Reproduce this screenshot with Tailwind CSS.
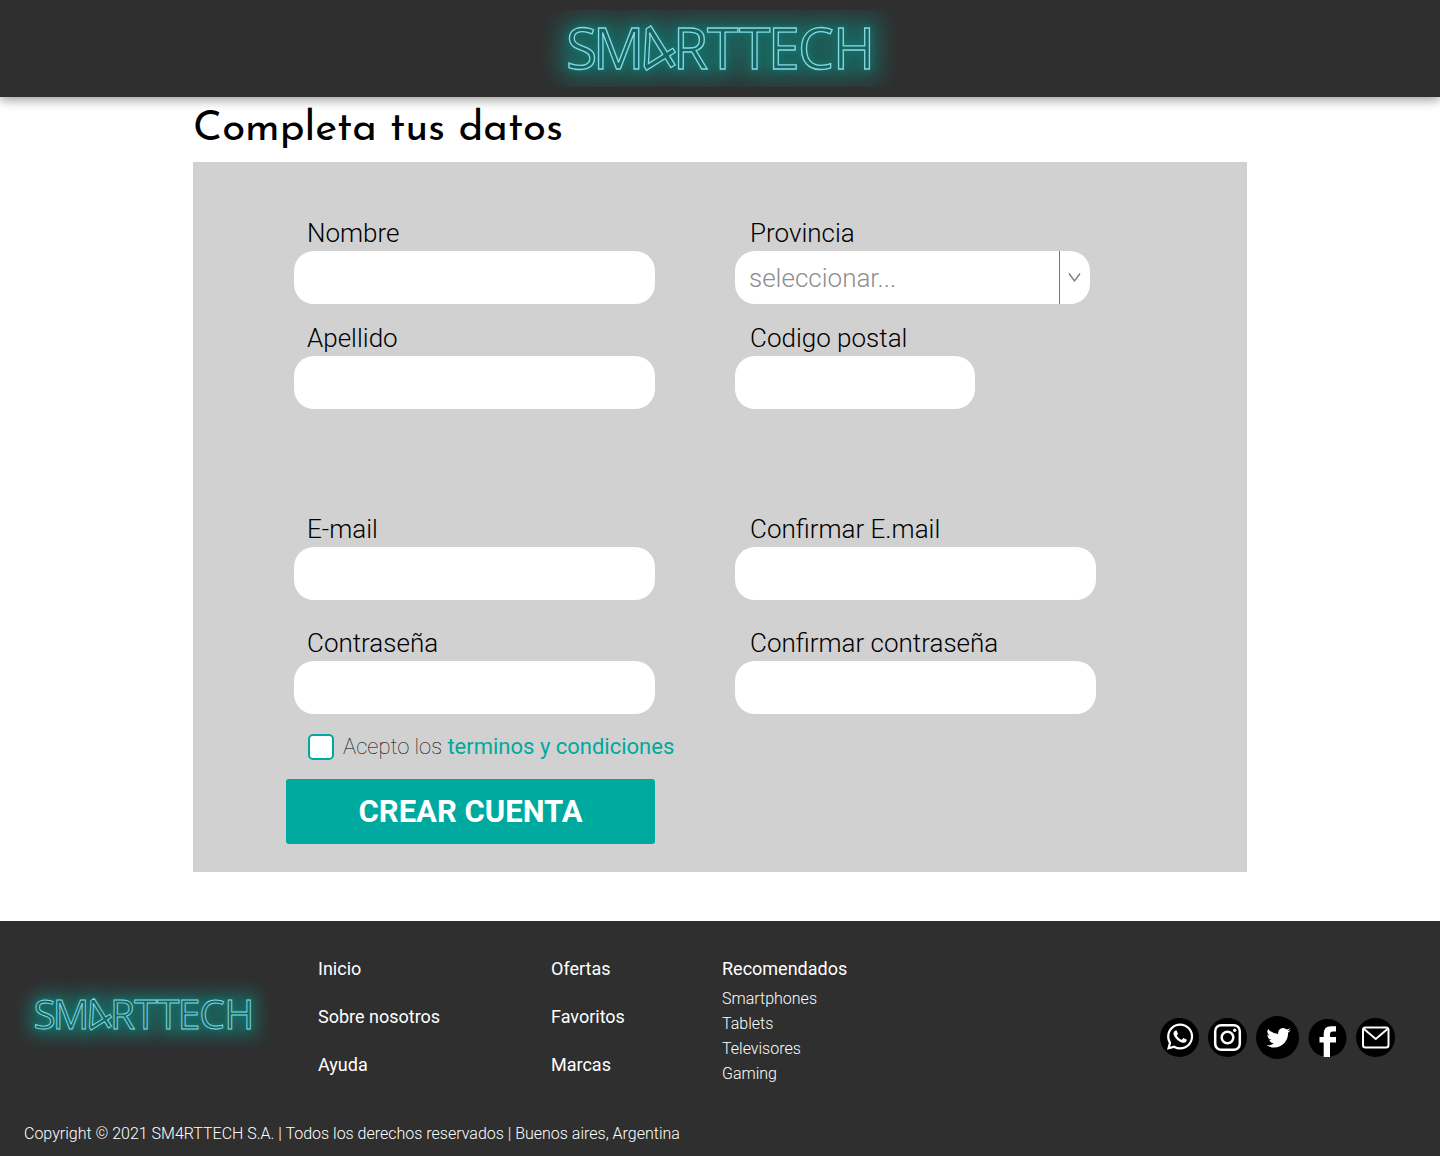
<!DOCTYPE html>
<html lang="es">
<head>
<meta charset="utf-8">
<meta name="viewport" content="width=device-width, initial-scale=1">
<title>SM4RTTECH - Completa tus datos</title>
<script src="https://cdn.jsdelivr.net/npm/@tailwindcss/browser@4"></script>
</head>
<body class="flex min-h-screen flex-col bg-white font-['Roboto',sans-serif] text-black">

<!-- Shared neon wordmark -->
<svg class="hidden">
  <defs>
    <filter id="glow" filterUnits="userSpaceOnUse" x="-40" y="-40" width="440" height="160">
      <feGaussianBlur stdDeviation="11"/>
    </filter>
    <filter id="halo" filterUnits="userSpaceOnUse" x="-40" y="-40" width="440" height="160">
      <feGaussianBlur stdDeviation="3"/>
    </filter>
    <g id="word" font-family="Open Sans, sans-serif" font-weight="400" font-size="57">
      <text x="26 53 133 167 199 228 258 293" y="59"><tspan>SM</tspan><tspan>RTTECH</tspan></text>
      <text transform="translate(111 70) rotate(-32)" font-size="64">4</text>
    </g>
    <g id="wordmark">
      <use href="#word" fill="none" stroke="#00a99d" stroke-width="20" opacity=".42" filter="url(#glow)"/>
      <use href="#word" fill="none" stroke="#00a99d" stroke-width="4" opacity=".25" filter="url(#halo)"/>
      <use href="#word" fill="#215c59" fill-opacity=".6" stroke="#7fdbe6" stroke-width="1.300"/>
    </g>
  </defs>
</svg>

<header class="relative flex justify-center bg-[#2f2f2f] py-[10px] shadow-[0_3px_10px_rgba(0,0,0,0.4)]">
  <a href="#" aria-label="SM4RTTECH"><svg class="block h-[77px] w-[360px] overflow-hidden" viewBox="0 0 360 77"><use href="#wordmark"/></svg></a>
</header>

<main class="mx-auto w-full max-w-[1054px] pb-[49px]">
  <h1 class="pt-[5px] pb-1 font-['Josefin_Sans','Lato',sans-serif] text-[42px] leading-[56px]">Completa tus datos</h1>

  <form class="bg-[#d1d1d1] pt-[55px] pr-[151px] pb-7 pl-[93px]">
    <div class="grid grid-cols-2 gap-x-20 gap-y-[18px] pl-2">
      <div>
        <label for="nombre" class="mb-0.5 block pl-[13px] text-[26px] leading-8 font-light">Nombre</label>
        <input id="nombre" type="text" class="block h-[53px] w-full rounded-[20px] bg-white px-[14px] text-[26px] font-light">
      </div>
      <div>
        <label for="provincia" class="mb-0.5 block pl-[15px] text-[26px] leading-8 font-light">Provincia</label>
        <div class="relative mr-1.5">
          <select id="provincia" class="block h-[53px] w-full appearance-none rounded-[20px] bg-white pt-0.5 pl-[14px] text-[26px] font-light text-[#8e8e8e]">
            <option>seleccionar...</option>
          </select>
          <span class="pointer-events-none absolute inset-y-0 right-0 flex w-[31px] items-center justify-center border-l border-[#777]">
            <svg class="h-[10px] w-[14px]" viewBox="0 0 14 10" fill="none" stroke="#777" stroke-width="1.3"><path d="M1 .5 6.500 8 12 .5"/></svg>
          </span>
        </div>
      </div>
      <div>
        <label for="apellido" class="mb-0.5 block pl-[13px] text-[26px] leading-8 font-light">Apellido</label>
        <input id="apellido" type="text" class="block h-[53px] w-full rounded-[20px] bg-white px-[14px] text-[26px] font-light">
      </div>
      <div>
        <label for="postal" class="mb-0.5 block pl-[15px] text-[26px] leading-8 font-light">Codigo postal</label>
        <input id="postal" type="text" class="block h-[53px] w-60 rounded-[20px] bg-white px-[14px] text-[26px] font-light">
      </div>
    </div>

    <div class="mt-[104px] grid grid-cols-2 gap-x-20 gap-y-[27px] pl-2">
      <div>
        <label for="email" class="mb-0.5 block pl-[13px] text-[26px] leading-8 font-light">E-mail</label>
        <input id="email" type="email" class="block h-[53px] w-full rounded-[20px] bg-white px-[14px] text-[26px] font-light">
      </div>
      <div>
        <label for="email2" class="mb-0.5 block pl-[15px] text-[26px] leading-8 font-light">Confirmar E.mail</label>
        <input id="email2" type="email" class="block h-[53px] w-full rounded-[20px] bg-white px-[14px] text-[26px] font-light">
      </div>
      <div>
        <label for="clave" class="mb-0.5 block pl-[13px] text-[26px] leading-8 font-light">Contraseña</label>
        <input id="clave" type="password" class="block h-[53px] w-full rounded-[20px] bg-white px-[14px] text-[26px] font-light">
      </div>
      <div>
        <label for="clave2" class="mb-0.5 block pl-[15px] text-[26px] leading-8 font-light">Confirmar contraseña</label>
        <input id="clave2" type="password" class="block h-[53px] w-full rounded-[20px] bg-white px-[14px] text-[26px] font-light">
      </div>
    </div>

    <div class="mt-5 flex items-center gap-[9px] pl-[22px]">
      <input id="acepto" type="checkbox" class="size-[26px] appearance-none rounded-[5px] border-2 border-[#00a99d] bg-white checked:bg-[#00a99d]">
      <label for="acepto" class="text-[22px] leading-[26px] font-thin">Acepto los <a href="#" class="font-normal text-[#00a99d]">terminos y condiciones</a></label>
    </div>

    <button type="submit" class="mt-[19px] block h-[65px] w-[369px] rounded-[3px] bg-[#00a99d] pt-0.5 text-[31px] font-bold text-white">CREAR CUENTA</button>
  </form>
</main>

<footer class="mt-auto bg-[#2f2f2f] pt-9 pb-[10px] text-white">
  <div class="flex items-start pr-[45px] pl-[14px]">
    <a href="#" aria-label="SM4RTTECH" class="mt-[30px] shrink-0"><svg class="block h-[55px] w-[259px] overflow-visible" viewBox="0 0 360 77"><use href="#wordmark"/></svg></a>
    <nav class="ml-[45px] flex text-[18px] leading-6">
      <ul class="flex w-[233px] flex-col gap-6">
        <li><a href="#">Inicio</a></li>
        <li><a href="#">Sobre nosotros</a></li>
        <li><a href="#">Ayuda</a></li>
      </ul>
      <ul class="flex w-[171px] flex-col gap-6">
        <li><a href="#">Ofertas</a></li>
        <li><a href="#">Favoritos</a></li>
        <li><a href="#">Marcas</a></li>
      </ul>
      <div>
        <a href="#">Recomendados</a>
        <ul class="mt-[5px] text-base leading-[25px] font-light">
          <li><a href="#">Smartphones</a></li>
          <li><a href="#">Tablets</a></li>
          <li><a href="#">Televisores</a></li>
          <li><a href="#">Gaming</a></li>
        </ul>
      </div>
    </nav>
    <div class="mt-[59px] ml-auto flex items-center gap-[9px]">
      <a href="#" aria-label="WhatsApp"><svg class="block size-[39px]" viewBox="0 0 39 39"><circle cx="19.500" cy="19.500" r="19.500"/><path transform="translate(7 5.500) scale(1.640)" fill="#fff" d="M13.601 2.326A7.850 7.850 0 0 0 7.994 0C3.627 0 .068 3.558.064 7.926c0 1.399.366 2.760 1.057 3.965L0 16l4.204-1.102a7.900 7.900 0 0 0 3.790.965h.004c4.368 0 7.926-3.558 7.930-7.930A7.900 7.900 0 0 0 13.600 2.326zM7.994 14.521a6.600 6.600 0 0 1-3.356-.920l-.240-.144-2.494.654.666-2.433-.156-.251a6.560 6.560 0 0 1-1.007-3.505c0-3.626 2.957-6.584 6.591-6.584a6.560 6.560 0 0 1 4.660 1.931 6.560 6.560 0 0 1 1.928 4.660c-.004 3.639-2.961 6.592-6.592 6.592m3.615-4.934c-.197-.099-1.170-.578-1.353-.646-.182-.065-.315-.099-.445.099-.133.197-.513.646-.627.775-.114.133-.232.148-.430.050-.197-.100-.836-.308-1.592-.985-.590-.525-.985-1.175-1.103-1.372-.114-.198-.011-.304.088-.403.087-.088.197-.232.296-.346.100-.114.133-.198.198-.330.065-.134.034-.248-.015-.347-.050-.099-.445-1.076-.612-1.470-.160-.389-.323-.335-.445-.340-.114-.007-.247-.007-.380-.007a.730.730 0 0 0-.529.247c-.182.198-.691.677-.691 1.654s.710 1.916.810 2.049c.098.133 1.394 2.132 3.383 2.992.470.205.840.326 1.129.418.475.152.904.129 1.246.080.380-.058 1.171-.480 1.338-.943.164-.464.164-.860.114-.943-.049-.084-.182-.133-.380-.232"/></svg></a>
      <a href="#" aria-label="Instagram"><svg class="block size-[39px]" viewBox="0 0 39 39"><circle cx="19.500" cy="19.500" r="19.500"/><rect x="7.200" y="7.200" width="24.600" height="24.600" rx="6" fill="none" stroke="#fff" stroke-width="2.500"/><circle cx="19.500" cy="19.500" r="5.800" fill="none" stroke="#fff" stroke-width="2.500"/><circle cx="26.700" cy="12.300" r="1.700" fill="#fff"/></svg></a>
      <a href="#" aria-label="Twitter"><svg class="block size-[43px]" viewBox="0 0 43 43"><circle cx="21.500" cy="21.500" r="21.500"/><path transform="translate(10.500 9) scale(1.500)" fill="#fff" d="M5.026 15c6.038 0 9.341-5.003 9.341-9.334q.002-.211-.006-.422A6.700 6.700 0 0 0 16 3.542a6.700 6.700 0 0 1-1.889.518 3.300 3.300 0 0 0 1.447-1.817 6.500 6.500 0 0 1-2.087.793A3.286 3.286 0 0 0 7.875 6.030a9.320 9.320 0 0 1-6.767-3.429 3.290 3.290 0 0 0 1.018 4.382A3.300 3.300 0 0 1 .640 6.575v.045a3.290 3.290 0 0 0 2.632 3.218 3.200 3.200 0 0 1-.865.115 3 3 0 0 1-.614-.057 3.280 3.280 0 0 0 3.067 2.277A6.600 6.600 0 0 1 .780 13.580a6 6 0 0 1-.780-.045A9.340 9.340 0 0 0 5.026 15"/></svg></a>
      <a href="#" aria-label="Facebook"><svg class="block size-[39px]" viewBox="0 0 39 39"><circle cx="19.500" cy="20" r="19"/><path fill="#fff" d="M15.700 39V24.500H11.500V19h4.200V15.500q0-7.300 7.300-7.300h5V13.500h-3q-3 0-3 2.800V19h6v5.500h-6V39z"/></svg></a>
      <a href="#" aria-label="E-mail"><svg class="block size-[39px]" viewBox="0 0 39 39"><circle cx="19.500" cy="19.500" r="19.500"/><g fill="none" stroke="#fff" stroke-width="2"><rect x="7" y="9.500" width="25.500" height="20" rx="2.500"/><path d="m8 11 11.750 10L31.500 11"/></g></svg></a>
    </div>
  </div>
  <p class="mt-9 px-6 text-base leading-6 font-light">Copyright © 2021 SM4RTTECH S.A. | Todos los derechos reservados | Buenos aires, Argentina</p>
</footer>
</body>
</html>
